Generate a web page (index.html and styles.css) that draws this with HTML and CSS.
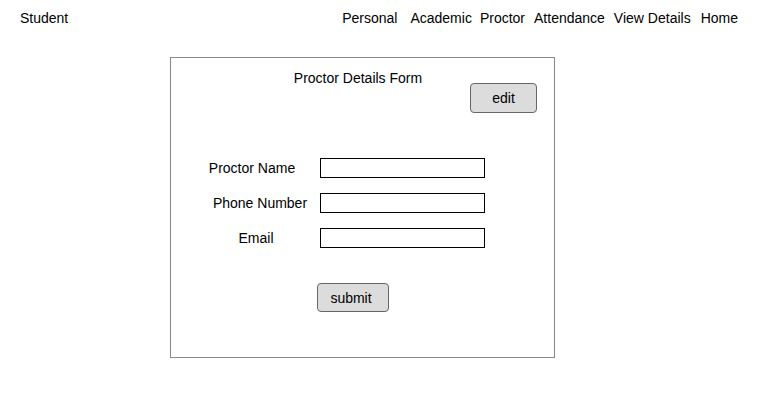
FILE: index.html
```html
<!DOCTYPE html>
<html>
<head>
<meta charset="utf-8">
<link rel="stylesheet" href="styles.css">
</head>
<body>
<header class="topbar">
  <div class="brand">Student</div>
  <nav class="nav">
    <a class="nav-link">Personal</a>
    <a class="nav-link nav-wide">Academic</a>
    <a class="nav-link">Proctor</a>
    <a class="nav-link">Attendance</a>
    <a class="nav-link">View Details</a>
    <a class="nav-link nav-home">Home</a>
  </nav>
</header>
<main class="card">
  <h1 class="card-title">Proctor Details Form</h1>
  <div class="card-actions">
    <button class="btn btn-edit">edit</button>
  </div>
  <form class="form">
    <div class="form-row">
      <label class="form-label label-left">Proctor Name</label>
      <input class="form-input" type="text">
    </div>
    <div class="form-row">
      <label class="form-label label-right">Phone Number</label>
      <input class="form-input" type="text">
    </div>
    <div class="form-row">
      <label class="form-label">Email</label>
      <input class="form-input" type="text">
    </div>
    <div class="form-submit">
      <button class="btn btn-submit" type="button">submit</button>
    </div>
  </form>
</main>
</body>
</html>
```
FILE: styles.css
```css
* { box-sizing: border-box; }
body {
  margin: 0;
  font-family: "Liberation Sans", Arial, sans-serif;
  font-size: 14px;
  line-height: 16px;
  color: #000;
  background: #fff;
}
.topbar {
  display: flex;
  justify-content: space-between;
  padding: 10px 39px 0 20px;
  height: 26px;
}
.nav { display: flex; gap: 9px; }
.nav-link { color: #000; text-decoration: none; }
.nav-wide { margin-left: 4px; margin-right: -1px; }
.nav-home { margin-left: 1px; }
.card {
  margin: 31px 0 0 170px;
  width: 385px;
  height: 301px;
  border: 1px solid #888;
  padding-top: 12px;
}
.card-title {
  margin: 0;
  font-size: 14px;
  font-weight: normal;
  line-height: 16px;
  text-align: center;
  padding-right: 9px;
}
.card-actions {
  display: flex;
  justify-content: flex-end;
  margin-top: -3px;
  padding-right: 17px;
}
.btn {
  font-family: "Liberation Sans", Arial, sans-serif;
  font-size: 14px;
  color: #000;
  background: #dcdcdc;
  border: 1px solid #666;
  border-radius: 4px;
  padding: 0;
}
.btn-edit { width: 67px; height: 30px; }
.form {
  margin-top: 45px;
  display: flex;
  flex-direction: column;
  gap: 15px;
}
.form-row {
  display: flex;
  align-items: center;
  padding-left: 21px;
}
.form-label {
  width: 128px;
  text-align: center;
}
.label-left { padding-right: 8px; }
.label-right { padding-left: 8px; }
.form-input {
  width: 165px;
  height: 20px;
  border: 1px solid #000;
  border-radius: 0;
  padding: 0;
  margin: 0;
}
.form-submit {
  margin-top: 20px;
  padding-left: 146px;
}
.btn-submit { width: 72px; height: 29px; padding-right: 4px; }
```
